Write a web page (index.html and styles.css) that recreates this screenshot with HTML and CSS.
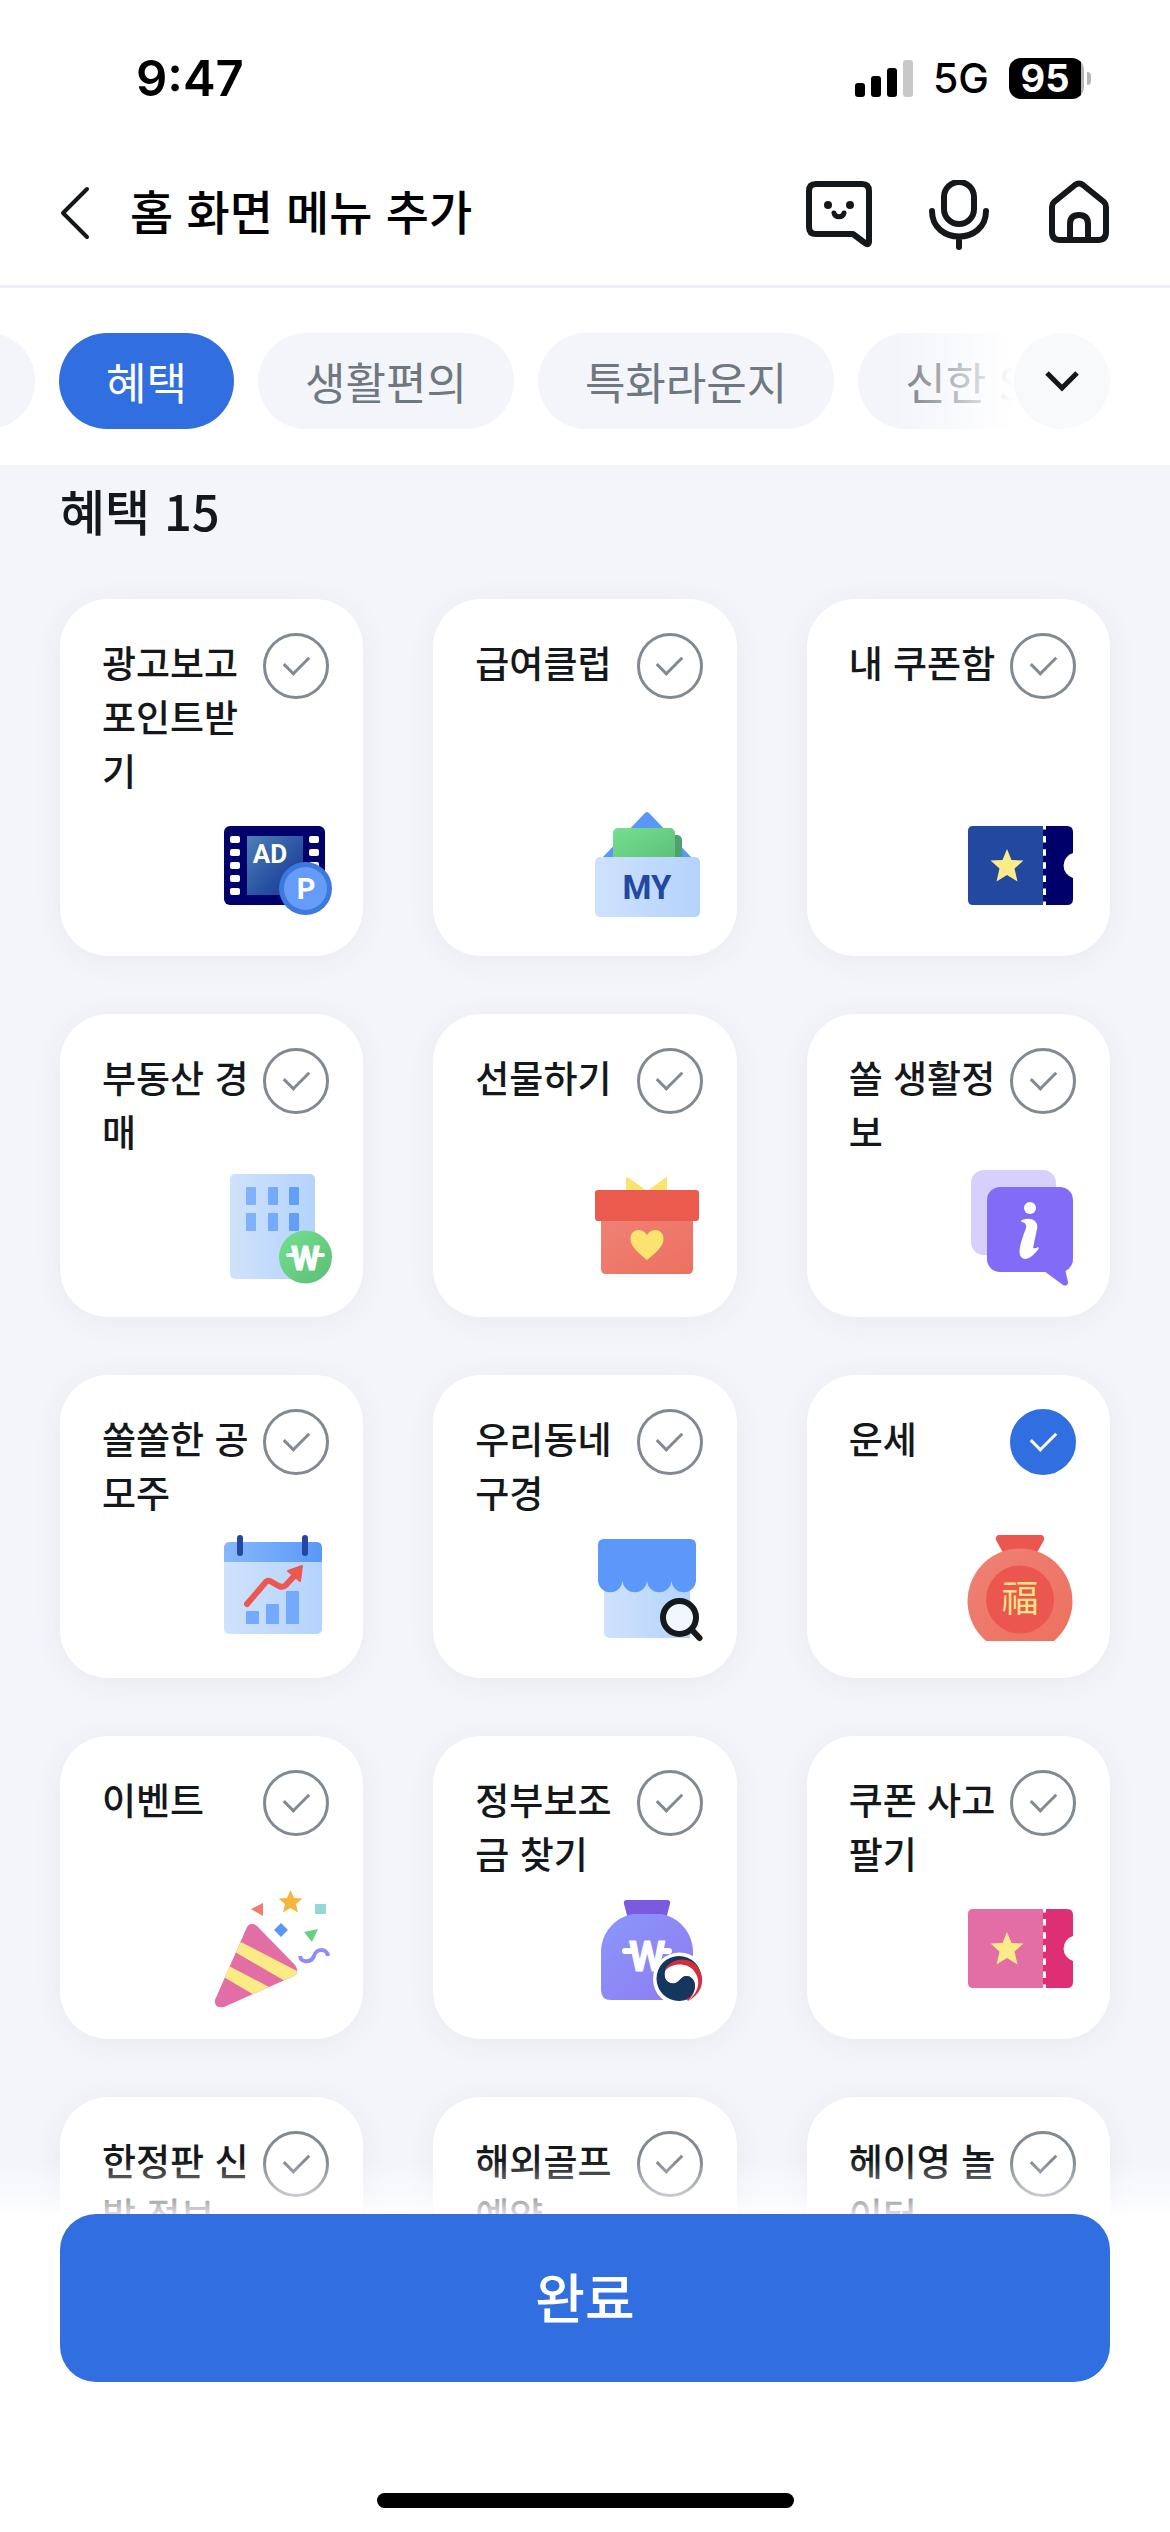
FILE: index.html
```html
<!DOCTYPE html>
<html lang="ko">
<head>
  <meta charset="UTF-8" />
  <meta name="viewport" content="width=device-width, initial-scale=1.0"/>
  <title>홈 화면 메뉴 추가</title>
  <link rel="stylesheet" href="styles.css">
</head>
<body>
  <div class="status-bar">
    <span class="time">9:47</span>
    <div class="status-right">
      <svg class="signal" viewBox="0 0 58 38" aria-hidden="true">
        <rect x="0" y="24" width="10" height="14" rx="3"/>
        <rect x="16" y="17" width="10" height="21" rx="3"/>
        <rect x="32" y="9" width="10" height="29" rx="3"/>
        <rect x="48" y="1" width="10" height="37" rx="3" fill="#c8c8c8"/>
      </svg>
      <span class="network">5G</span>
      <span class="battery">95</span>
    </div>
  </div>

  <header class="top-bar">
    <button class="icon-btn back" aria-label="뒤로">
      <svg viewBox="0 0 30 54" width="30" height="54"><path d="M27 3 L3 27 L27 51" stroke-width="4"/></svg>
    </button>
    <h1>홈 화면 메뉴 추가</h1>
    <nav class="top-icons">
      <button class="icon-btn" aria-label="챗봇">
        <svg viewBox="0 0 70 70" width="70" height="70">
          <path d="M12 4 H58 Q65 4 65 11 V61 Q65 66 61 63 L49 54 H12 Q5 54 5 47 V11 Q5 4 12 4 Z"/>
          <path d="M30 33 C31 38 39 38 40 33" stroke-width="5"/>
          <circle class="dot" cx="24" cy="25" r="4"/>
          <circle class="dot" cx="46" cy="25" r="4"/>
        </svg>
      </button>
      <button class="icon-btn" aria-label="음성 검색">
        <svg viewBox="0 0 70 70" width="70" height="70">
          <rect x="20" y="2" width="30" height="42" rx="15"/>
          <path d="M8 31 C8 65 62 65 62 31 M35 57 V67"/>
        </svg>
      </button>
      <button class="icon-btn" aria-label="홈">
        <svg viewBox="0 0 70 70" width="70" height="70">
          <path d="M31 5 Q35 2 39 5 L60 22 Q62 24 62 27 V52 Q62 60 54 60 H16 Q8 60 8 52 V27 Q8 24 10 22 Z"/>
          <path d="M26 60 V44 Q26 35 35 35 Q44 35 44 44 V60"/>
        </svg>
      </button>
    </nav>
  </header>

  <div class="tab-bar">
    <div class="tabs">
      <button class="tab prev" aria-label="이전 메뉴"></button>
      <button class="tab active">혜택</button>
      <button class="tab">생활편의</button>
      <button class="tab">특화라운지</button>
      <button class="tab">신한 SOL</button>
    </div>
    <div class="tabs-more">
      <button class="more-btn" aria-label="전체 메뉴">
        <svg viewBox="0 0 36 22" width="36" height="22"><path d="M3 3 L18 18 L33 3" stroke-width="5"/></svg>
      </button>
    </div>
  </div>

  <main>
    <h2>혜택 15</h2>

    <div class="grid">
      <!-- row 1 -->
      <label class="card">
        <span class="card-top"><span class="name">광고보고 포인트받기</span><input type="checkbox"></span>
        <svg class="pic" viewBox="0 0 120 120">
          <defs>
            <linearGradient id="screen" x1="0" y1="0" x2="1" y2="1"><stop offset="0" stop-color="#4c80b4"/><stop offset=".7" stop-color="#22489f"/></linearGradient>
            <linearGradient id="pale" x1="0" y1="0" x2="1" y2="0"><stop offset="0" stop-color="#cfe2fc"/><stop offset="1" stop-color="#b4d3fc"/></linearGradient>
            <linearGradient id="green" x1="0" y1="0" x2="1" y2="1"><stop offset="0" stop-color="#74e090"/><stop offset="1" stop-color="#5cbd77"/></linearGradient>
            <linearGradient id="blue" x1="0" y1="0" x2="1" y2="0"><stop offset="0" stop-color="#88b8fb"/><stop offset="1" stop-color="#5a98f8"/></linearGradient>
            <linearGradient id="coral" x1="0" y1="0" x2="1" y2="1"><stop offset="0" stop-color="#ee8275"/><stop offset="1" stop-color="#ed705f"/></linearGradient>
            <linearGradient id="violet" x1="0" y1="0" x2="1" y2="1"><stop offset="0" stop-color="#8a97fb"/><stop offset="1" stop-color="#8f7bf0"/></linearGradient>
            <path id="star" d="M0 -17 L4.500 -6 L16.500 -5.500 L7.500 2.500 L10.500 15.500 L0 9 L-10.500 15.500 L-7.500 2.500 L-16.500 -5.500 L-4.500 -6 Z"/>
          </defs>
          <rect x="11" y="20" width="101" height="79" rx="6" fill="#00006b"/>
          <rect x="34" y="30" width="56" height="59" fill="url(#screen)"/>
          <g fill="#fff">
            <rect x="17" y="30" width="10" height="7" rx="2"/><rect x="17" y="43" width="10" height="7" rx="2"/>
            <rect x="17" y="56" width="10" height="7" rx="2"/><rect x="17" y="69" width="10" height="7" rx="2"/>
            <rect x="17" y="82" width="10" height="7" rx="2"/>
            <rect x="96" y="30" width="10" height="7" rx="2"/><rect x="96" y="43" width="10" height="7" rx="2"/>
            <rect x="96" y="56" width="10" height="7" rx="2"/>
          </g>
          <text x="57" y="57" font-size="26" fill="#fff">AD</text>
          <circle cx="92.500" cy="82.500" r="26.500" fill="#3d78dc"/>
          <circle cx="92.500" cy="82.500" r="21.500" fill="#649cf8"/>
          <text x="93" y="93" font-size="29" fill="#fff">P</text>
        </svg>
      </label>
      <label class="card">
        <span class="card-top"><span class="name">급여클럽</span><input type="checkbox"></span>
        <svg class="pic" viewBox="0 0 120 120">
          <path d="M57 8 Q60 4 63 8 L105 52 H15 Z" fill="#5997f8"/>
          <rect x="60" y="29" width="35" height="30" rx="5" fill="#4ca273"/>
          <rect x="26" y="22" width="62" height="36" rx="5" fill="url(#green)"/>
          <rect x="8" y="51" width="105" height="60" rx="5" fill="url(#pale)"/>
          <text x="60" y="93" font-size="33" fill="#22489f">MY</text>
        </svg>
      </label>
      <label class="card">
        <span class="card-top"><span class="name">내 쿠폰함</span><input type="checkbox"></span>
        <svg class="pic" viewBox="0 0 120 120">
          <path d="M13 20 H83 V99 H13 Q8 99 8 94 V25 Q8 20 13 20 Z" fill="#22489f"/>
          <path d="M83 20 H107 Q113 20 113 26 V47 A13 13 0 0 0 113 72 V93 Q113 99 107 99 H83 Z" fill="#00006b"/>
          <path d="M84.500 17 V99" stroke="#fff" stroke-width="3" stroke-dasharray="6.500 6.600"/>
          <use href="#star" x="47" y="60" fill="#fbeb8a"/>
        </svg>
      </label>

      <!-- row 2 -->
      <label class="card">
        <span class="card-top"><span class="name">부동산 경매</span><input type="checkbox"></span>
        <svg class="pic" viewBox="0 0 120 120">
          <rect x="17" y="7" width="85" height="105" rx="5" fill="url(#pale)"/>
          <g fill="#7fb2fb"><rect x="33" y="20" width="10" height="18" rx="1"/><rect x="33" y="46" width="10" height="18" rx="1"/></g>
          <g fill="#74aafa"><rect x="55" y="20" width="10" height="18" rx="1"/><rect x="55" y="46" width="10" height="18" rx="1"/></g>
          <g fill="#639ff8"><rect x="76" y="20" width="10" height="18" rx="1"/><rect x="76" y="46" width="10" height="18" rx="1"/></g>
          <circle cx="92.500" cy="90" r="26.500" fill="url(#green)"/>
          <text class="won" x="92.500" y="103" font-size="33">W</text>
          <path d="M75 88 H80 M105 88 H110" stroke="#fff" stroke-width="4" stroke-linecap="round"/>
        </svg>
      </label>
      <label class="card">
        <span class="card-top"><span class="name">선물하기</span><input type="checkbox"></span>
        <svg class="pic" viewBox="0 0 120 120">
          <path d="M39 12 Q39 9 42 11 L60 24 L78 11 Q80 9 80 12 V26 H39 Z" fill="#fae36e"/>
          <path d="M14 50 H106 V102 Q106 107 101 107 H19 Q14 107 14 102 Z" fill="url(#coral)"/>
          <rect x="8" y="23" width="104" height="31" rx="3" fill="#eb5b4d"/>
          <path d="M60 93 C52 86 43.500 80 43.500 72 C43.500 62 55 60 60 68 C65 60 76.500 62 76.500 72 C76.500 80 68 86 60 93 Z" fill="#fae36e"/>
        </svg>
      </label>
      <label class="card">
        <span class="card-top"><span class="name">쏠 생활정보</span><input type="checkbox"></span>
        <svg class="pic" viewBox="0 0 120 120">
          <rect x="11" y="3" width="85" height="85" rx="13" fill="#d7cffc"/>
          <rect x="27" y="20" width="86" height="85" rx="13" fill="#826cf7"/>
          <path d="M84 104 L103 118 Q108 120 108 115 L105 102 Z" fill="#826cf7"/>
          <circle cx="70" cy="41" r="6" fill="#fff"/>
          <path d="M62 53 Q70 50 75 54 Q78 57 77 62 L73 81 Q76 82 78 80 Q80 81 77 84 Q70 92 65 92 Q58 91 60 80 Q61 74 66 61 Q67 56 62 55 Q60 54 62 53 Z" fill="#fff"/>
        </svg>
      </label>

      <!-- row 3 -->
      <label class="card">
        <span class="card-top"><span class="name">쏠쏠한 공모주</span><input type="checkbox"></span>
        <svg class="pic" viewBox="0 0 120 120">
          <rect x="11" y="14" width="98" height="92" rx="5" fill="url(#pale)"/>
          <path d="M11 34 V20 Q11 14 17 14 H103 Q109 14 109 20 V34 Z" fill="url(#blue)"/>
          <rect x="24" y="7" width="6" height="21" rx="3" fill="#22489f"/>
          <rect x="89" y="7" width="6" height="21" rx="3" fill="#22489f"/>
          <g fill="#74aafb">
            <rect x="33" y="83" width="13" height="13" rx="1"/>
            <rect x="53" y="76" width="13" height="20" rx="1"/>
            <rect x="73" y="63" width="13" height="33" rx="1"/>
          </g>
          <path d="M34 76 L52 55 Q54 52 57 53 L66 58 Q70 60 73 57 L83 46" fill="none" stroke="#ec5850" stroke-width="6" stroke-linecap="round"/>
          <path d="M89 38 L75 43 L87 53 Z" fill="#ec5850" stroke="#ec5850" stroke-width="2" stroke-linejoin="round"/>
        </svg>
      </label>
      <label class="card">
        <span class="card-top"><span class="name">우리동네 구경</span><input type="checkbox"></span>
        <svg class="pic" viewBox="0 0 120 120">
          <path d="M17 40 H103 V110 H22 Q17 109 17 105 Z" fill="url(#pale)"/>
          <path d="M11 17 Q11 11 17 11 H103 Q109 11 109 17 V52 A12.250 12.250 0 0 1 84.500 52 A12.250 12.250 0 0 1 60 52 A12.250 12.250 0 0 1 35.500 52 A12.250 12.250 0 0 1 11 52 Z" fill="#5b98f9"/>
          <circle cx="92.500" cy="89.500" r="16.500" fill="#f1f6ff" stroke="#15191c" stroke-width="6"/>
          <path d="M105 102 L112.500 110" stroke="#15191c" stroke-width="6" stroke-linecap="round"/>
        </svg>
      </label>
      <label class="card">
        <span class="card-top"><span class="name">운세</span><input type="checkbox" checked></span>
        <svg class="pic" viewBox="0 0 120 120">
          <path d="M38 7 H82 Q85 9 84 12 L74 30 H46 L36 12 Q35 9 38 7 Z" fill="#eb564f"/>
          <path d="M26 113 A52.500 52.500 0 1 1 94 113 Z" fill="url(#coral)"/>
          <circle cx="60" cy="71.500" r="34" fill="#eb564f"/>
          <text class="luck" x="60" y="84" font-size="37">福</text>
        </svg>
      </label>

      <!-- row 4 -->
      <label class="card">
        <span class="card-top"><span class="name">이벤트</span><input type="checkbox"></span>
        <svg class="pic" viewBox="0 0 120 120">
          <clipPath id="cone"><path d="M34 38 Q38 32 44 37 L82 76 Q87 83 81 87 L11 118 Q1 120 2 111 Z"/></clipPath>
          <g clip-path="url(#cone)">
            <rect width="120" height="120" fill="#e26ea5"/>
            <path d="M28 53 L88 84 L72 92 L22 63 Z M16 77 L58 99 L43 107 L9 87 Z" fill="#fbeb86"/>
          </g>
          <path d="M77.500 1 L81 9 L89.500 9.500 L83 15 L85 23.500 L77.500 19 L70 23.500 L72 15 L65.500 9.500 L74 9 Z" fill="#f5b63c"/>
          <path d="M38 20 L50 14 V27 Z" fill="#ee7d6f"/>
          <rect x="102" y="15" width="11" height="10" fill="#90d9d5"/>
          <path d="M68 34 L75 41 L68 48 L61 41 Z" fill="#5997f8"/>
          <path d="M91 43 L105 40 L99 53 Z" fill="#65d182"/>
          <path d="M87 67 C88 75 99 73 101 67 C103 59 114 59 115 67" fill="none" stroke="#8e8df8" stroke-width="4"/>
        </svg>
      </label>
      <label class="card">
        <span class="card-top"><span class="name">정부보조금 찾기</span><input type="checkbox"></span>
        <svg class="pic" viewBox="0 0 120 120">
          <path d="M40 11 H80 Q84 11 83 15 L79 30 H41 L37 15 Q36 11 40 11 Z" fill="#7a5ae0"/>
          <path d="M46 25 H74 C92 28 106 44 106 63 V101 Q106 111 96 111 H24 Q14 111 14 101 V63 C14 44 28 28 46 25 Z" fill="url(#violet)"/>
          <text class="won" x="60" y="82" font-size="42">W</text>
          <path d="M38 62 H44 M76 62 H82" stroke="#fff" stroke-width="6" stroke-linecap="round"/>
          <circle cx="92.500" cy="90" r="26.500" fill="#fff"/>
          <circle cx="92" cy="89.500" r="22.500" fill="#14365f"/>
          <path d="M78 80 C87 67 105 68 112 80 C119 92 114 105 101 112 Z" fill="#d22f3a"/>
          <path d="M78 82 C84 74 100 73 107 82 C115 92 111 104 101 112 C106 107 108 102 108 97 C108 90 103 87 99.500 87 C94 87 92 94 87 94.500 C80 95 76 89 78 82 Z" fill="#fff"/>
          <path d="M77 80 C71 95 80 111 94 111 C104 111 108 102 108 97 C108 90 103 87 99.500 87 C94 87 92 94 87 94.500 C80 95 76 89 78 82 Z" fill="#14365f"/>
        </svg>
      </label>
      <label class="card">
        <span class="card-top"><span class="name">쿠폰 사고팔기</span><input type="checkbox"></span>
        <svg class="pic" viewBox="0 0 120 120">
          <path d="M13 20 H83 V99 H13 Q8 99 8 94 V25 Q8 20 13 20 Z" fill="#e26ea5"/>
          <path d="M83 20 H107 Q113 20 113 26 V47 A13 13 0 0 0 113 72 V93 Q113 99 107 99 H83 Z" fill="#df2f74"/>
          <path d="M84.500 17 V99" stroke="#fff" stroke-width="3" stroke-dasharray="6.500 6.600"/>
          <use href="#star" x="47" y="60" fill="#fbeb8a"/>
        </svg>
      </label>

      <!-- row 5 -->
      <label class="card">
        <span class="card-top"><span class="name">한정판 신발 정보</span><input type="checkbox"></span>
      </label>
      <label class="card">
        <span class="card-top"><span class="name">해외골프 예약</span><input type="checkbox"></span>
      </label>
      <label class="card">
        <span class="card-top"><span class="name">헤이영 놀이터</span><input type="checkbox"></span>
      </label>
    </div>
  </main>

  <footer>
    <button class="done-btn">완료</button>
    <div class="home-indicator"></div>
  </footer>
</body>
</html>
```

FILE: styles.css
```css
* {
  box-sizing: border-box;
}

body {
  margin: 0;
  height: 100vh;
  display: flex;
  flex-direction: column;
  overflow: hidden;
  background: #fff;
  color: #14181b;
  font-family: "Noto Sans CJK KR", sans-serif;
}

button {
  margin: 0;
  padding: 0;
  border: none;
  background: none;
  font-family: inherit;
  cursor: pointer;
}

/* status bar */
.status-bar {
  display: flex;
  justify-content: space-between;
  align-items: center;
  height: 156px;
  padding: 0 86px 0 136px;
  color: #000;
  font-family: Inter, sans-serif;
}

.time {
  font-size: 49px;
  font-weight: 600;
}

.status-right {
  display: flex;
  align-items: center;
}

.signal {
  width: 58px;
  height: 38px;
  margin-right: 20px;
}

.network {
  margin-right: 20px;
  font-size: 41px;
  font-weight: 500;
}

.battery {
  position: relative;
  width: 75px;
  height: 41px;
  padding-right: 3px;
  border-radius: 12px;
  background: linear-gradient(90deg, #000 72px, #b5b5b5 72px);
  color: #fff;
  font-size: 38px;
  font-weight: 700;
  line-height: 41px;
  text-align: center;
}

.battery::after {
  content: "";
  position: absolute;
  top: 14px;
  right: -7px;
  width: 4px;
  height: 13px;
  border-radius: 0 4px 4px 0;
  background: #b5b5b5;
}

/* title bar */
.top-bar {
  display: flex;
  align-items: center;
  height: 132px;
  padding: 0 56px 16px 60px;
  border-bottom: 3px solid #ebeef5;
}

.top-bar h1 {
  flex: 1;
  margin: 0 0 0 40px;
  padding-bottom: 6px;
  color: #000;
  font-size: 47px;
  font-weight: 500;
}

.top-icons {
  display: flex;
  gap: 50px;
  padding-top: 4px;
}

.icon-btn svg {
  display: block;
  fill: none;
  stroke: #14181b;
  stroke-width: 6;
  stroke-linecap: round;
  stroke-linejoin: round;
}

.icon-btn .dot {
  fill: #14181b;
  stroke: none;
}

/* category tabs */
.tab-bar {
  position: relative;
  padding: 45px 0 36px;
  overflow: hidden;
}

.tabs {
  display: flex;
  gap: 24px;
}

.tab {
  flex: none;
  height: 96px;
  padding: 0 47px;
  border-radius: 48px;
  background: #f3f5fb;
  color: #6f7780;
  font-size: 44px;
}

.tab.prev {
  margin-left: -59px;
}

.tab.active {
  background: #316fe1;
  color: #fff;
}

.tabs-more {
  position: absolute;
  top: 0;
  right: 0;
  bottom: 0;
  display: flex;
  align-items: center;
  padding: 9px 60px 0 120px;
  background: linear-gradient(90deg, rgba(255, 255, 255, 0), #fff 120px);
}

.more-btn {
  width: 96px;
  height: 96px;
  border-radius: 50%;
  background: #f7f9fb;
}

.more-btn svg {
  display: block;
  margin: 0 auto;
  fill: none;
  stroke: #14181b;
}

/* menu list */
main {
  flex: 1;
  min-height: 0;
  padding: 9px 60px 60px;
  overflow-y: auto;
  scrollbar-width: none;
  background: #f3f5fa;
}

h2 {
  margin: 0 0 53px;
  font-size: 49px;
  font-weight: 500;
  line-height: 72px;
}

.grid {
  display: grid;
  grid-template-columns: repeat(3, 1fr);
  grid-auto-rows: minmax(303px, auto);
  gap: 58px 70px;
}

.card {
  display: flex;
  flex-direction: column;
  padding: 34px 30px 30px 42px;
  border-radius: 48px;
  background: #fff;
  box-shadow: 0 4px 30px rgba(60, 70, 110, 0.06);
}

.card-top {
  display: flex;
  align-items: flex-start;
  margin-bottom: 9px;
}

.name {
  flex: 1;
  padding-top: 2px;
  font-size: 37px;
  font-weight: 500;
  line-height: 54px;
  word-break: break-all;
}

.card input {
  flex: none;
  width: 66px;
  height: 66px;
  margin: 0 4px 0 0;
  appearance: none;
  border: 3px solid #818993;
  border-radius: 50%;
  display: grid;
  place-items: center;
}

/* tick mark */
.card input::before {
  content: "";
  width: 12px;
  height: 21px;
  margin-bottom: 8px;
  border: solid #818993;
  border-width: 0 3px 3px 0;
  transform: rotate(45deg);
}

.card input:checked {
  border-color: #316fe1;
  background: #316fe1;
}

.card input:checked::before {
  border-color: #fff;
}

.pic {
  align-self: flex-end;
  width: 120px;
  height: 120px;
  margin-top: auto;
}

.pic text {
  font-family: Roboto, sans-serif;
  font-weight: 700;
  text-anchor: middle;
}

.pic .won {
  fill: #fff;
  stroke: #fff;
  stroke-linejoin: round;
}

.pic .luck {
  fill: #fbe387;
  font-family: "Noto Sans CJK KR", sans-serif;
  font-weight: 400;
}

/* bottom button */
footer {
  position: relative;
  padding: 0 60px 24px;
  background: #fff;
}

/* fades the list out above the button */
footer::before {
  content: "";
  position: absolute;
  left: 0;
  right: 0;
  bottom: 100%;
  height: 54px;
  background: linear-gradient(rgba(255, 255, 255, 0), rgba(255, 255, 255, 0.85));
}

.done-btn {
  display: block;
  width: 100%;
  height: 168px;
  padding-bottom: 6px;
  border-radius: 36px;
  background: #316fe1;
  color: #fff;
  font-size: 54px;
  font-weight: 500;
}

.home-indicator {
  width: 417px;
  height: 15px;
  margin: 111px auto 0;
  border-radius: 8px;
  background: #000;
}
```
